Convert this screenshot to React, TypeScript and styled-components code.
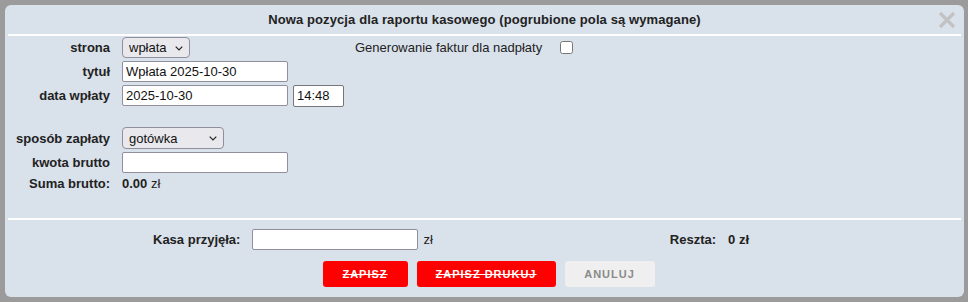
import React from "react";
import styled, { createGlobalStyle } from "styled-components";

const GlobalStyle = createGlobalStyle`
  html, body {
    margin: 0;
    padding: 0;
    background: #9b9b9b;
  }
  body {
    width: 968px;
    height: 302px;
    overflow: hidden;
    font-family: "Liberation Sans", Arial, sans-serif;
    font-size: 13px;
    color: #222;
  }
`;

const Backdrop = styled.div`
  width: 968px;
  height: 302px;
  padding: 5px 4px 5px 5px;
  box-sizing: border-box;
`;

const Dialog = styled.div`
  width: 959px;
  height: 292px;
  background: #d9e1ea;
  border-radius: 6px;
  display: flex;
  flex-direction: column;
  box-sizing: border-box;
`;

const TitleBar = styled.div`
  position: relative;
  height: 29px;
  margin: 0 3px;
  border-bottom: 2px solid #fff;
  display: flex;
  align-items: center;
  justify-content: center;
  font-weight: bold;
  font-size: 13px;
  letter-spacing: 0.1px;
  color: #222;
`;

const CloseButton = styled.button`
  position: absolute;
  right: 5px;
  top: 6px;
  width: 18px;
  height: 18px;
  padding: 0;
  border: 0;
  background: none;
  cursor: pointer;
`;

const Form = styled.div`
  display: grid;
  grid-template-columns: 105px 1fr;
  grid-template-rows: 21px 21px 21px 15px 22px 21px 15px;
  column-gap: 12px;
  row-gap: 3px;
  padding: 1px 0 27px;
`;

const Label = styled.div`
  display: flex;
  align-items: center;
  justify-content: flex-end;
  font-weight: bold;
  white-space: nowrap;
`;

const Field = styled.div`
  display: flex;
  align-items: center;
`;

const SelectWrap = styled.div<{ width: number }>`
  position: relative;
  width: ${(p) => p.width}px;
  height: 100%;
`;

const Select = styled.select`
  appearance: none;
  width: 100%;
  height: 100%;
  font-family: "Liberation Sans", Arial, sans-serif;
  font-size: 13px;
  color: #111;
  background: #e9e9ed;
  border: 1px solid #8f8f9d;
  border-radius: 4px;
  padding: 0 18px 0 6px;
  box-sizing: border-box;
`;

const Chevron = styled.svg`
  position: absolute;
  right: 7px;
  top: 50%;
  margin-top: -2px;
  pointer-events: none;
`;

const TextInput = styled.input<{ width: number }>`
  width: ${(p) => p.width}px;
  height: 21px;
  box-sizing: border-box;
  font-family: "Liberation Sans", Arial, sans-serif;
  font-size: 13px;
  color: #111;
  background: #fff;
  border: 1px solid #8f8f9d;
  border-radius: 2px;
  padding: 1px 3px;
  margin: 0;
`;

const TimeInput = styled(TextInput)`
  height: 22px;
  margin-left: 5px;
  border-color: #767676;
`;

const Extra = styled.label`
  display: flex;
  align-items: center;
  margin-left: 165px;
  color: #222;
  white-space: nowrap;
`;

const Checkbox = styled.input`
  width: 13px;
  height: 13px;
  margin: 0 0 1px 18px;
`;

const Value = styled.span`
  font-weight: bold;
`;

const Unit = styled.span`
  font-weight: normal;
`;

const Separator = styled.div`
  height: 2px;
  margin: 0 3px;
  background: #fff;
`;

const PayRow = styled.div`
  display: flex;
  align-items: center;
  height: 21px;
  margin-top: 9px;
  padding-left: 148px;
`;

const PayLabel = styled.span`
  font-weight: bold;
  margin-right: 12px;
`;

const Currency = styled.span`
  margin-left: 5px;
`;

const Change = styled.div`
  display: flex;
  gap: 12px;
  margin-left: 237px;
  font-weight: bold;
`;

const Buttons = styled.div`
  display: flex;
  justify-content: center;
  gap: 9px;
  margin-top: 11px;
  padding-left: 8px;
`;

const Button = styled.button<{ width: number; primary?: boolean }>`
  width: ${(p) => p.width}px;
  height: 26px;
  border: 0;
  border-radius: 3px;
  font-family: "Liberation Sans", Arial, sans-serif;
  font-size: 11px;
  font-weight: bold;
  letter-spacing: 1px;
  cursor: pointer;
  background: ${(p) => (p.primary ? "#ff0000" : "#efefef")};
  color: ${(p) => (p.primary ? "#fff" : "#8a8a8a")};
  text-decoration: ${(p) => (p.primary ? "line-through" : "none")};
`;

const CloseIcon = () => (
  <svg width="18" height="18" viewBox="0 0 18 18">
    <path d="M2 2 L16 16 M16 2 L2 16" stroke="#c2c2c2" strokeWidth="3.2" />
  </svg>
);

const Dropdown = ({
  width,
  value,
  options,
}: {
  width: number;
  value: string;
  options: [string, string][];
}) => (
  <SelectWrap width={width}>
    <Select defaultValue={value}>
      {options.map(([v, label]) => (
        <option key={v} value={v}>
          {label}
        </option>
      ))}
    </Select>
    <Chevron width="8" height="5" viewBox="0 0 8 5">
      <path d="M0.7 0.7 L4 4 L7.3 0.7" fill="none" stroke="#222" strokeWidth="1.2" />
    </Chevron>
  </SelectWrap>
);

export default function App() {
  return (
    <>
      <GlobalStyle />
      <Backdrop>
        <Dialog>
          <TitleBar>
            Nowa pozycja dla raportu kasowego (pogrubione pola są wymagane)
            <CloseButton aria-label="zamknij">
              <CloseIcon />
            </CloseButton>
          </TitleBar>
          <Form>
            <Label>strona</Label>
            <Field>
              <Dropdown
                width={68}
                value="wplata"
                options={[
                  ["wplata", "wpłata"],
                  ["wyplata", "wypłata"],
                ]}
              />
              <Extra>
                Generowanie faktur dla nadpłaty
                <Checkbox type="checkbox" />
              </Extra>
            </Field>
            <Label>tytuł</Label>
            <Field>
              <TextInput width={166} defaultValue="Wpłata 2025-10-30" />
            </Field>
            <Label>data wpłaty</Label>
            <Field>
              <TextInput width={166} defaultValue="2025-10-30" />
              <TimeInput width={51} defaultValue="14:48" />
            </Field>
            <div />
            <div />
            <Label>sposób zapłaty</Label>
            <Field>
              <Dropdown
                width={102}
                value="gotowka"
                options={[
                  ["gotowka", "gotówka"],
                  ["karta", "karta"],
                  ["przelew", "przelew"],
                ]}
              />
            </Field>
            <Label>kwota brutto</Label>
            <Field>
              <TextInput width={166} defaultValue="" />
            </Field>
            <Label>Suma brutto:</Label>
            <Field>
              <Value>
                0.00 <Unit>zł</Unit>
              </Value>
            </Field>
          </Form>
          <Separator />
          <PayRow>
            <PayLabel>Kasa przyjęła:</PayLabel>
            <TextInput width={166} defaultValue="" />
            <Currency>zł</Currency>
            <Change>
              <span>Reszta:</span>
              <span>0 zł</span>
            </Change>
          </PayRow>
          <Buttons>
            <Button width={85} primary>
              ZAPISZ
            </Button>
            <Button width={139} primary>
              ZAPISZ DRUKUJ
            </Button>
            <Button width={90}>ANULUJ</Button>
          </Buttons>
        </Dialog>
      </Backdrop>
    </>
  );
}
